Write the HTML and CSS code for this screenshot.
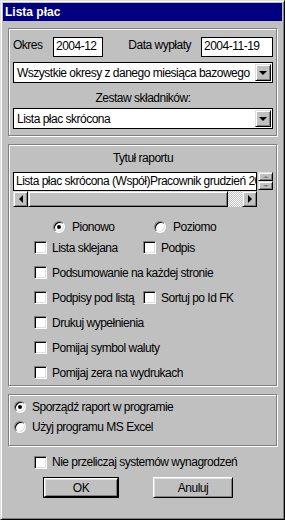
FILE: index.html
```
<!DOCTYPE html>
<html lang="pl">
<head>
  <meta charset="UTF-8">
  <meta name="viewport" content="width=device-width, initial-scale=1.0">
  <title>Lista płac</title>
  <link rel="stylesheet" href="styles.css">
</head>
<body>
  <div class="window">
    <div class="title-bar">Lista płac</div>

    <div class="window-body">
      <div class="group group-period">
        <div class="date-row">
          <span class="label label-period">Okres</span>
          <span class="field field-period">2004-12</span>
          <span class="label label-date">Data wypłaty</span>
          <span class="field field-date">2004-11-19</span>
        </div>
        <div class="combo combo-first">
          <span class="combo-text">Wszystkie okresy z danego miesiąca bazowego</span>
          <span class="combo-btn"><span class="arrow-down"></span></span>
        </div>
        <div class="caption caption-set">Zestaw składników:</div>
        <div class="combo">
          <span class="combo-text">Lista płac skrócona</span>
          <span class="combo-btn"><span class="arrow-down"></span></span>
        </div>
      </div>

      <div class="group group-options">
        <div class="caption caption-title">Tytuł raportu</div>
        <div class="title-row">
          <div class="title-col">
            <div class="field field-title">Lista płac skrócona (Współ)Pracownik grudzień 2004</div>
            <div class="scrollbar">
              <span class="scroll-btn"><span class="arrow-left"></span></span>
              <span class="scroll-thumb"></span>
              <span class="scroll-track"></span>
              <span class="scroll-btn"><span class="arrow-right"></span></span>
            </div>
          </div>
          <div class="spin">
            <span class="spin-btn"><span class="spin-up"></span></span>
            <span class="spin-btn"><span class="spin-down"></span></span>
          </div>
        </div>

        <div class="radio-row">
          <span class="option option-wide"><span class="radio checked"></span><span class="radio-label">Pionowo</span></span>
          <span class="option"><span class="radio"></span><span class="radio-label">Poziomo</span></span>
        </div>

        <div class="check-row">
          <span class="option option-col"><span class="check"></span><span class="check-label">Lista sklejana</span></span>
          <span class="option"><span class="check"></span><span class="check-label">Podpis</span></span>
        </div>
        <div class="check-row">
          <span class="option"><span class="check"></span><span class="check-label">Podsumowanie na każdej stronie</span></span>
        </div>
        <div class="check-row">
          <span class="option option-col"><span class="check"></span><span class="check-label">Podpisy pod listą</span></span>
          <span class="option"><span class="check"></span><span class="check-label">Sortuj po Id FK</span></span>
        </div>
        <div class="check-row">
          <span class="option"><span class="check"></span><span class="check-label">Drukuj wypełnienia</span></span>
        </div>
        <div class="check-row">
          <span class="option"><span class="check"></span><span class="check-label">Pomijaj symbol waluty</span></span>
        </div>
        <div class="check-row">
          <span class="option"><span class="check"></span><span class="check-label">Pomijaj zera na wydrukach</span></span>
        </div>
      </div>

      <div class="group group-output">
        <div class="output-row">
          <span class="radio checked"></span><span class="output-label">Sporządź raport w programie</span>
        </div>
        <div class="output-row">
          <span class="radio"></span><span class="output-label">Użyj programu MS Excel</span>
        </div>
      </div>

      <div class="recalc-row">
        <span class="check"></span><span class="check-label">Nie przeliczaj systemów wynagrodzeń</span>
      </div>

      <div class="button-row">
        <button class="btn btn-default">OK</button>
        <button class="btn btn-cancel">Anuluj</button>
      </div>
    </div>
  </div>
</body>
</html>
```

FILE: styles.css
```
body {
  margin: 0;
  padding: 0;
  background: #c0c0c0;
  font-family: 'Liberation Sans', Arial, sans-serif;
  font-size: 12px;
  letter-spacing: -0.5px;
  color: #000;
}

.window {
  width: 285px;
  height: 520px;
  box-sizing: border-box;
  padding: 2px;
  background: #c0c0c0;
  border: 1px solid;
  border-color: #dfdfdf #000 #000 #dfdfdf;
  box-shadow: inset 1px 1px #fff, inset -1px -1px #808080;
}

.title-bar {
  height: 18px;
  line-height: 18px;
  padding-left: 2px;
  background: #000080;
  color: #fff;
  font-weight: bold;
  font-size: 12px;
  letter-spacing: 0;
}

.window-body {
  padding: 7px 0 0 5px;
}

/* ramki grup */
.group {
  width: 269px;
  box-sizing: border-box;
  border: 1px solid #808080;
  box-shadow: inset 1px 1px #fff, 1px 1px #fff;
}

.group-period {
  padding: 8px 3px 6px 4px;
}

.group-options {
  margin-top: 8px;
  padding: 5px 3px 0 4px;
}

.group-output {
  margin-top: 8px;
  padding: 2px 3px 8px 5px;
}

.date-row {
  display: flex;
  align-items: flex-start;
  height: 20px;
}

.label {
  line-height: 17px;
  white-space: nowrap;
}

.label-period {
  width: 40px;
}

.label-date {
  margin-left: auto;
  margin-right: 10px;
}

.field {
  box-sizing: border-box;
  height: 20px;
  line-height: 17px;
  padding: 0 2px;
  background: #fff;
  border: 1px solid #000;
  white-space: nowrap;
  overflow: hidden;
}

.field-period {
  width: 50px;
}

.field-date {
  width: 72px;
}

.combo {
  display: flex;
  align-items: center;
  box-sizing: border-box;
  height: 21px;
  background: #fff;
  border: 1px solid #000;
}

.combo-first {
  margin-top: 5px;
}

.combo-text {
  flex: 1;
  padding-left: 3px;
  white-space: nowrap;
  overflow: hidden;
}

.combo-btn,
.scroll-btn,
.spin-btn {
  display: flex;
  align-items: center;
  justify-content: center;
  box-sizing: border-box;
  background: #c0c0c0;
  border: 1px solid;
  border-color: #dfdfdf #000 #000 #dfdfdf;
  box-shadow: inset 1px 1px #fff, inset -1px -1px #808080;
}

.combo-btn {
  flex: none;
  width: 16px;
  height: 17px;
  margin-right: 1px;
}

.arrow-down {
  width: 0;
  height: 0;
  border-left: 4px solid transparent;
  border-right: 4px solid transparent;
  border-top: 4px solid #000;
  margin-top: 1px;
}

.caption {
  text-align: center;
  line-height: 16px;
}

.caption-set {
  margin-top: 7px;
  margin-bottom: 2px;
}

.caption-title {
  margin-bottom: 6px;
}

/* tytuł raportu */
.title-row {
  display: flex;
}

.title-col {
  width: 244px;
}

.field-title {
  height: 19px;
  line-height: 17px;
}

.scrollbar {
  display: flex;
  height: 16px;
}

.scroll-btn {
  width: 15px;
  height: 16px;
}

.scroll-thumb {
  width: 200px;
  box-sizing: border-box;
  border: 1px solid;
  border-color: #dfdfdf #000 #000 #dfdfdf;
  box-shadow: inset 1px 1px #fff, inset -1px -1px #808080;
}

.scroll-track {
  flex: 1;
  background-image: conic-gradient(#fff 25%, #c0c0c0 0 50%, #fff 0 75%, #c0c0c0 0);
  background-size: 2px 2px;
}

.arrow-left {
  width: 0;
  height: 0;
  border-top: 4px solid transparent;
  border-bottom: 4px solid transparent;
  border-right: 4px solid #000;
}

.arrow-right {
  width: 0;
  height: 0;
  border-top: 4px solid transparent;
  border-bottom: 4px solid transparent;
  border-left: 4px solid #000;
}

.spin {
  display: flex;
  flex-direction: column;
  width: 16px;
  margin-left: 1px;
}

.spin-btn {
  height: 9px;
}

.spin-up {
  width: 0;
  height: 0;
  border-left: 3px solid transparent;
  border-right: 3px solid transparent;
  border-bottom: 2px solid #808080;
}

.spin-down {
  width: 0;
  height: 0;
  border-left: 3px solid transparent;
  border-right: 3px solid transparent;
  border-top: 2px solid #808080;
}

/* opcje */
.radio-row {
  display: flex;
  align-items: center;
  height: 16px;
  margin-top: 12px;
  padding-left: 40px;
}

.check-row {
  display: flex;
  align-items: center;
  height: 25px;
  padding-left: 21px;
}

.option {
  display: flex;
  align-items: center;
  white-space: nowrap;
}

.option-wide {
  width: 101px;
}

.option-col {
  width: 109px;
}

.radio {
  position: relative;
  flex: none;
  width: 12px;
  height: 12px;
  box-sizing: border-box;
  border-radius: 50%;
  background: #fff;
  border: 1px solid;
  border-color: #808080 #fff #fff #808080;
  box-shadow: inset 1px 1px #000, inset -1px -1px #dfdfdf;
}

.radio.checked::after {
  content: '';
  position: absolute;
  left: 3px;
  top: 3px;
  width: 4px;
  height: 4px;
  border-radius: 50%;
  background: #000;
}

.radio-label {
  margin-left: 7px;
}

.check {
  flex: none;
  width: 13px;
  height: 13px;
  box-sizing: border-box;
  background: #fff;
  border: 1px solid;
  border-color: #808080 #fff #fff #808080;
  box-shadow: inset 1px 1px #000, inset -1px -1px #dfdfdf;
}

.check-label {
  margin-left: 5px;
}

.output-row {
  display: flex;
  align-items: center;
  height: 20px;
}

.output-label {
  margin-left: 6px;
}

.recalc-row {
  display: flex;
  align-items: center;
  height: 16px;
  margin-top: 8px;
  padding-left: 26px;
}

/* przyciski */
.button-row {
  display: flex;
  margin-top: 7px;
  padding-left: 35px;
}

.btn {
  height: 21px;
  padding: 0;
  font-family: inherit;
  font-size: 12px;
  letter-spacing: inherit;
  color: #000;
  background: #c0c0c0;
  border: 1px solid;
  border-color: #fff #000 #000 #fff;
  box-shadow: inset 1px 1px #dfdfdf, inset -1px -1px #808080;
}

.btn-default {
  width: 74px;
  height: 19px;
  margin: 1px 0 0 1px;
  box-shadow: 0 0 0 1px #000, inset 1px 1px #dfdfdf, inset -1px -1px #808080;
}

.btn-cancel {
  width: 80px;
  margin-left: 35px;
}
```
